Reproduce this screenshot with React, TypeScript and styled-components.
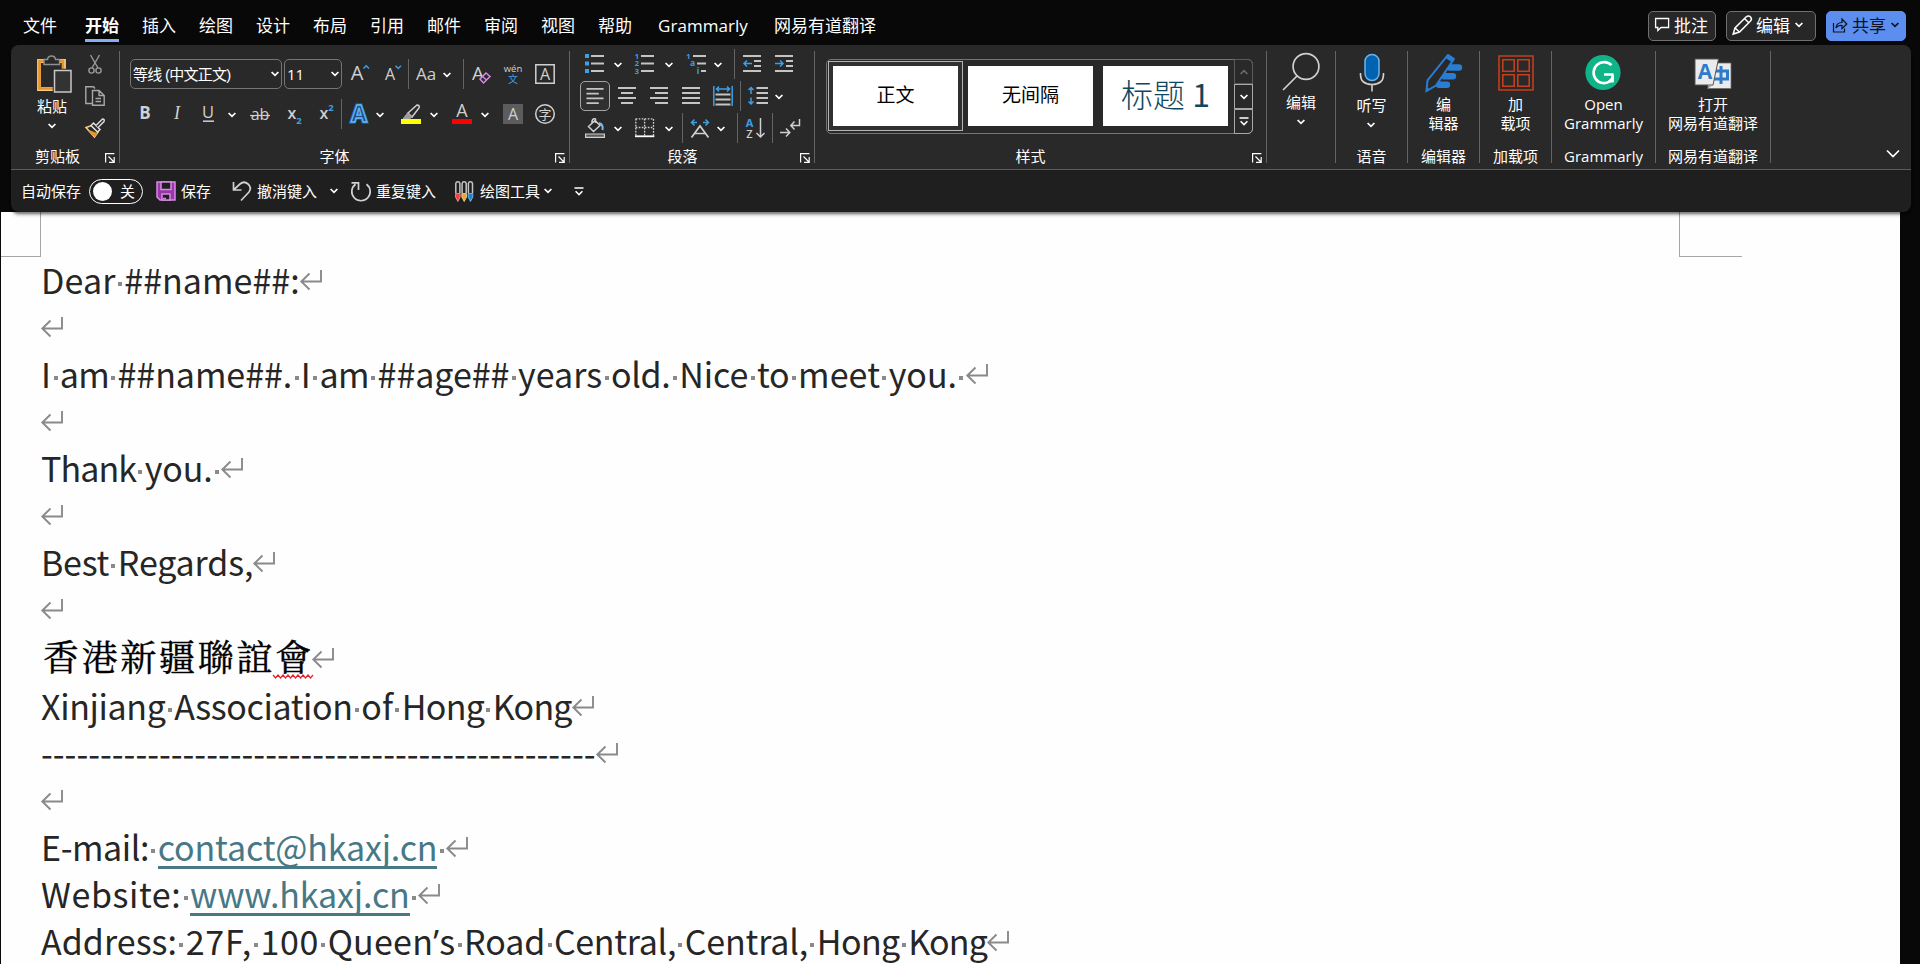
import React from 'react';
import styled, { createGlobalStyle, css } from 'styled-components';

const ui = '"Open Sans", "Noto Sans CJK SC", sans-serif';
const INK = '#d0d0d0';
const BLUE = '#3f9fe0';

const GlobalStyle = createGlobalStyle`
  html, body { margin: 0; padding: 0; background: #080808; overflow: hidden; }
  *, *::before, *::after { box-sizing: border-box; }
  svg { display: block; flex: none; overflow: visible; }
`;

const Window = styled.div`
  width: 1920px;
  height: 964px;
  overflow: hidden;
  display: flex;
  flex-direction: column;
  background: #080808;
  color: #fff;
  font-family: ${ui};
`;

/* ---------- tab strip ---------- */
const TabStrip = styled.header`
  height: 45px;
  flex: none;
  display: flex;
  align-items: flex-start;
  padding: 11px 14px 0 23px;
`;
const Tabs = styled.nav`
  display: flex;
  gap: 23px;
`;
const Tab = styled.span<{ $active?: boolean; $latin?: boolean }>`
  height: 31px;
  font-size: 17px;
  line-height: 30px;
  white-space: nowrap;
  ${p => p.$active && css`
    margin-left: 5px;
    font-weight: 700;
    box-shadow: inset 0 -3px #86aef2;
  `}
  ${p => p.$latin && css`
    margin: 0 3px;
    letter-spacing: 0.05px;
  `}
`;
const Actions = styled.div`
  display: flex;
  gap: 10px;
  margin-left: auto;
`;
const ActionButton = styled.button<{ $width: number; $primary?: boolean }>`
  width: ${p => p.$width}px;
  height: 30px;
  padding: 0 0 3px 5px;
  display: flex;
  align-items: center;
  gap: 4px;
  border-radius: 5px;
  border: 1px solid ${p => (p.$primary ? '#5b8eee' : '#707070')};
  background: ${p => (p.$primary ? '#5b8eee' : '#272727')};
  color: ${p => (p.$primary ? '#0c1220' : '#fff')};
  font: 17px ${ui};
  white-space: nowrap;
`;

/* ---------- ribbon ---------- */
const Ribbon = styled.section`
  height: 167px;
  flex: none;
  margin: 0 9px 0 11px;
  border-radius: 8px;
  background: #1f1f1f;
  position: relative;
  z-index: 2;
  box-shadow: 0 2px 2px rgba(0, 0, 0, 0.4), 0 4px 3px rgba(0, 0, 0, 0.16);
`;
const Groups = styled.div`
  height: 125px;
  padding: 6px 0;
  display: flex;
  border-radius: 8px 8px 0 0;
  border-bottom: 1px solid #5c5c5c;
  background: #292929;
`;
const Group = styled.div<{ $width: number }>`
  width: ${p => p.$width}px;
  height: 112px;
  flex: none;
  border-right: 1px solid #636363;
  display: flex;
  flex-direction: column;
`;
const GroupBody = styled.div`
  height: 100px;
  display: flex;
  justify-content: center;
`;
const GroupFooter = styled.div`
  height: 12px;
  display: flex;
  align-items: center;
  font-size: 15px;
  line-height: 12px;
`;
const GroupLabel = styled.span<{ $inset?: number }>`
  flex: 1;
  margin-right: ${p => p.$inset ?? 0}px;
  padding-bottom: 2px;
  text-align: center;
  white-space: nowrap;
`;
const LauncherBox = styled.span`
  width: 10px;
  margin-right: 4px;
  padding-top: 2px;
`;
const ExpandButton = styled.span`
  margin: 98px 11px 0 auto;
`;

const BigButton = styled.div`
  display: flex;
  flex-direction: column;
  align-items: center;
  padding-top: 2px;
  font-size: 15px;
  line-height: 19px;
  white-space: nowrap;
  text-align: center;
`;
const BigIcon = styled.span`
  height: 40px;
  display: flex;
  align-items: flex-start;
`;
const BigCaption = styled.span<{ $shift?: number }>`
  margin-top: ${p => 2 + (p.$shift ?? 0)}px;
`;
const CaptionLine = styled.span`
  display: block;
`;
const ChevronLine = styled.span`
  height: 19px;
  padding-top: 1px;
  display: flex;
  align-items: center;
  justify-content: center;
`;
const ClipboardSide = styled.div`
  display: flex;
  flex-direction: column;
  gap: 12px;
  padding-top: 3px;
  margin: 0 14px 0 12px;
`;
const PasteSlot = styled.div`
  margin-left: auto;
  ${BigIcon} { padding-left: 6px; }
`;

/* ---------- small tool rows ---------- */
const ToolRows = styled.div<{ $gap: number; $top: number }>`
  width: 100%;
  display: flex;
  flex-direction: column;
  gap: ${p => p.$gap}px;
  margin-top: ${p => p.$top}px;
`;
const ToolRow = styled.div`
  height: 30px;
  display: flex;
  align-items: center;
`;
const Tool = styled.span<{ $ml: number }>`
  width: 20px;
  height: 20px;
  flex: none;
  margin-left: ${p => p.$ml}px;
`;
const Drop = styled.span<{ $ml: number }>`
  width: 10px;
  flex: none;
  margin-left: ${p => p.$ml}px;
  padding-top: 1px;
`;
const Divider = styled.span<{ $ml: number }>`
  width: 1px;
  height: 30px;
  flex: none;
  margin-left: ${p => p.$ml}px;
  background: #636363;
`;
const Pressed = styled.span`
  width: 30px;
  height: 30px;
  margin-left: 10px;
  display: grid;
  place-items: center;
  border: 1px solid #a5a5a5;
  border-radius: 5px;
  background: #303030;
`;
const Combo = styled.span<{ $width: number; $ml: number }>`
  width: ${p => p.$width}px;
  height: 30px;
  flex: none;
  margin-left: ${p => p.$ml}px;
  padding: 0 1px 0 2px;
  display: flex;
  align-items: center;
  justify-content: space-between;
  border: 1px solid #757575;
  border-radius: 5px;
  font-size: 15px;
  white-space: nowrap;
`;
const ComboText = styled.span`
  letter-spacing: -0.75px;
  padding-bottom: 1px;
  font-family: "Liberation Sans", "Noto Sans CJK SC", sans-serif;
`;

/* ---------- style gallery ---------- */
const Gallery = styled.div`
  width: 427px;
  height: 75px;
  margin: 8px 13px 0 11px;
  display: flex;
  border: 1px solid #757575;
  border-radius: 5px;
`;
const StyleCell = styled.div<{ $selected?: boolean }>`
  width: 135px;
  height: 70px;
  margin-top: 1px;
  padding: 4px;
  border: 1px solid ${p => (p.$selected ? '#b4b4b4' : 'transparent')};
  background: ${p => (p.$selected ? '#303030' : 'transparent')};
  &:first-child { margin-left: 1px; }
`;
const StylePreview = styled.div<{ $heading?: boolean }>`
  width: 125px;
  height: 60px;
  display: flex;
  align-items: center;
  justify-content: center;
  background: #fff;
  color: ${p => (p.$heading ? '#0f4761' : '#000')};
  font-family: "Noto Sans CJK SC", sans-serif;
  font-size: ${p => (p.$heading ? 32 : 19)}px;
  font-weight: ${p => (p.$heading ? 200 : 400)};
  padding-bottom: 6px;
`;
const HeadingNumber = styled.span`
  font-weight: 400;
`;
const Scroller = styled.div`
  width: 19px;
  height: 75px;
  margin: -1px -1px 0 auto;
  display: flex;
  flex-direction: column;
`;
const ScrollButton = styled.span<{ $kind: 'up' | 'down' | 'more' }>`
  height: 25px;
  display: grid;
  place-items: center;
  border: 1px solid ${p => (p.$kind === 'up' ? '#5a5a5a' : '#a8a8a8')};
  border-radius: ${p => (p.$kind === 'up' ? '0 5px 0 0' : p.$kind === 'more' ? '0 0 5px 0' : '0')};
`;

/* ---------- quick access ---------- */
const QuickBar = styled.div`
  height: 42px;
  display: flex;
  align-items: center;
  padding-left: 10px;
  font-size: 15px;
  white-space: nowrap;
`;
const QuickItem = styled.span<{ $ml?: number; $gap?: number }>`
  display: flex;
  align-items: center;
  gap: ${p => p.$gap ?? 5}px;
  margin-left: ${p => p.$ml ?? 0}px;
`;
const QuickLabel = styled.span`
  padding-bottom: 2px;
`;
const Toggle = styled.span`
  width: 54px;
  height: 25px;
  margin-left: 8px;
  padding: 0 7px 0 3px;
  display: flex;
  align-items: center;
  justify-content: space-between;
  border: 1px solid #fff;
  border-radius: 13px;
`;
const Knob = styled.span`
  width: 19px;
  height: 19px;
  border-radius: 50%;
  background: #fff;
`;

/* ---------- document ---------- */
const Page = styled.main`
  flex: 1;
  width: 1899px;
  margin-left: 1px;
  background: #fefefe;
  overflow: hidden;
`;
const MarginMarks = styled.div`
  height: 45px;
  margin-bottom: -1px;
  display: flex;
  justify-content: space-between;
  padding-right: 158px;
`;
const CornerMark = styled.span<{ $side: 'left' | 'right' }>`
  width: ${p => (p.$side === 'left' ? 40 : 63)}px;
  border-bottom: 1px solid #a6a6a6;
  ${p => (p.$side === 'left' ? 'border-right' : 'border-left')}: 1px solid #a6a6a6;
`;
const Paragraph = styled.div<{ $cjk?: boolean }>`
  height: ${p => (p.$cjk ? 50 : 47)}px;
  padding-left: ${p => (p.$cjk ? 42 : 40)}px;
  display: flex;
  color: ${p => (p.$cjk ? '#000' : '#262626')};
  font-family: ${p => (p.$cjk ? '"AR PL UKai TW", "Noto Serif CJK TC", serif' : '"Noto Sans CJK SC", sans-serif')};
  font-size: ${p => (p.$cjk ? 36 : 34)}px;
  line-height: 47px;
  white-space: pre;
  font-variant-ligatures: none;
`;
const Word = styled.span<{ $track?: number; $link?: boolean }>`
  letter-spacing: ${p => p.$track ?? 0}px;
  ${p => p.$link && css`
    height: 46px;
    color: #467886;
    border-bottom: 3px solid #467886;
  `}
`;
const Apostrophe = styled.span`
  font-family: "Open Sans", sans-serif;
`;
const SpaceDot = styled.span`
  width: 8.66px;
  display: flex;
  justify-content: center;
  padding-top: 26px;
  font-size: 0;
  &::after {
    content: '';
    width: 4px;
    height: 4px;
    background: #8a8a8a;
  }
`;
const MarkBox = styled.span<{ $cjk?: boolean }>`
  padding-top: ${p => (p.$cjk ? 16 : 14)}px;
`;
const Hanzi = styled.span`
  letter-spacing: 2.7px;
  -webkit-text-stroke: 0.4px #000;
`;
const Misspelled = styled(Hanzi)`
  position: relative;
  margin-right: -2px;
  svg { position: absolute; left: -2px; top: 42px; }
`;

/* ---------- icons ---------- */
const Chevron = ({ color = '#fff' }: { color?: string }) => (
  <svg width="10" height="8" viewBox="0 0 10 8" fill="none" stroke={color} strokeWidth="1.7">
    <path d="M1.6 2 5 5.4 8.4 2" />
  </svg>
);
const Icon = ({ children, size = 20 }: { children: React.ReactNode; size?: number }) => (
  <svg width={size} height={size} viewBox={`0 0 ${size} ${size}`} fill="none" stroke={INK} strokeWidth="1.5">
    {children}
  </svg>
);
const Glyph = ({ x = 10, y = 17, size = 20, fill = INK, weight = 400, italic, anchor = 'middle', children }: {
  x?: number; y?: number; size?: number; fill?: string; weight?: number; italic?: boolean; anchor?: 'middle' | 'start'; children: string;
}) => (
  <text x={x} y={y} fontSize={size} fill={fill} stroke="none" fontWeight={weight} textAnchor={anchor}
    fontStyle={italic ? 'italic' : 'normal'} fontFamily={italic ? '"Liberation Serif", serif' : '"Open Sans", "Noto Sans CJK SC", sans-serif'}>
    {children}
  </text>
);
const Lines = ({ rows, color = '#c4c4c4' }: { rows: [number, number, number][]; color?: string }) => (
  <path stroke={color} strokeWidth="2" d={rows.map(([a, b, y]) => `M${a} ${y}H${b}`).join('')} />
);

const Launcher = () => (
  <LauncherBox>
    <svg width="10" height="10" viewBox="0 0 10 10" fill="none" stroke="#fff" strokeWidth="1.2">
      <path d="M.6 9.5V.6H9.4M3.5 3.5 9 9M9.2 4V9.3H4" />
    </svg>
  </LauncherBox>
);

const PasteIcon = () => (
  <svg width="36" height="40" viewBox="0 0 36 40" fill="none">
    <path d="M2 8H27V36H2Z" stroke="#f5d08c" strokeWidth="3.800" />
    <path d="M2.500 8H26V35.500H2.500Z" stroke="#e8952b" strokeWidth="2.600" />
    <path d="M7 11.500V6.500H10.500Q11 3 14.500 3T18.500 6.500H22.500V11.500Z" fill="#292929" stroke="#8f8f8f" strokeWidth="1.500" />
    <path d="M17.500 17.500H34V39H17.500Z" fill="#292929" stroke="#292929" strokeWidth="3.500" />
    <path d="M17.500 17.500H34V39H17.500Z" fill="#333" stroke="#c8c8c8" strokeWidth="1.500" />
  </svg>
);
const CutIcon = () => (
  <Icon>
    <g stroke="#9a9a9a" strokeWidth="1.400">
      <path d="M5.500 1 13 14M14.500 1 7 14" /><circle cx="6.500" cy="16.500" r="2.600" /><circle cx="13.500" cy="16.500" r="2.600" />
    </g>
  </Icon>
);
const CopyIcon = () => (
  <Icon>
    <g stroke="#a8a8a8" strokeWidth="1.400">
      <path d="M7 17.500H.8V.8H8.500L10 2.500" /><path d="M7.500 4.500H14L19.200 9.500V19.200H7.500ZM14 4.500V9.500H19M10.500 12.500H16M10.500 15.500H16" />
    </g>
  </Icon>
);
const BrushIcon = () => (
  <Icon>
    <path d="M1 9.500 6.500 7.500 13 14 9.500 19Z" fill="#292929" stroke="#f5d08c" />
    <path d="M4 12.500 12 15.500 9.500 18.500Z" fill="#e8952b" stroke="#e8952b" strokeWidth="1" />
    <path d="M6 7.500 8.500 5 15 11.500 12.500 14Z" fill="#292929" stroke="#e0e0e0" />
    <path d="M11 7.500 17.500 1Q20 1 19 3.500L13 9.500" fill="#292929" stroke="#d8d8d8" />
  </Icon>
);

const ClearFormatIcon = () => (
  <Icon><Glyph x={7} y={16} size={19}>A</Glyph><path d="M9 15 15 9 19 12.500 12.500 19Z" fill="#292929" stroke="#d68ae0" /><path d="M11.500 12.500 15.500 16" stroke="#d68ae0" /></Icon>
);
const BoxedLetterIcon = () => (
  <Icon><path d="M.8.800H19.200V19.200H.8Z" /><Glyph y={16} size={16}>A</Glyph></Icon>
);
const HighlighterIcon = () => (
  <Icon>
    <path d="M7 9 16 1Q19 1 18 4L11 13Z" /><path d="M6.500 9 11 13 8 15H2Z" fill="#999" stroke="#aaa" strokeWidth="1" />
    <path d="M0 15H20V20H0Z" fill="#ff0" stroke="none" />
  </Icon>
);

const align = {
  left: [[0, 18, 2], [0, 13, 7], [0, 18, 12], [0, 13, 17]],
  center: [[1, 19, 2], [4, 16, 7], [1, 19, 12], [4, 16, 17]],
  right: [[1, 19, 2], [6, 19, 7], [1, 19, 12], [6, 19, 17]],
  justify: [[1, 19, 2], [1, 19, 7], [1, 19, 12], [1, 19, 17]],
} as Record<string, [number, number, number][]>;

const UndoIcon = () => (
  <svg width="20" height="22" viewBox="0 0 20 22" fill="none" stroke={INK} strokeWidth="1.700">
    <path d="M1.500 2V10H9.500M2 9.500 8 4Q12 .5 16 4T17 12L9 20.500" />
  </svg>
);
const RedoIcon = () => (
  <svg width="20" height="22" viewBox="0 0 20 22" fill="none" stroke={INK} strokeWidth="1.700">
    <path d="M4.500 4.200A9.200 9.200 0 1 0 15.500 4.200M.5 2.800H7.500V10" />
  </svg>
);
const SaveIcon = () => (
  <Icon>
    <path d="M1 1H19V19H4L1 16Z" fill="#9a37a8" stroke="#d98be4" />
    <path d="M5 1H15V8.500H5Z" fill="#1f1f1f" stroke="#d98be4" /><path d="M6 19V13H14V19Z" fill="#1f1f1f" stroke="#d98be4" /><path d="M7 17.500H10" stroke="#d98be4" />
  </Icon>
);
const PensIcon = () => (
  <svg width="19" height="21" viewBox="0 0 19 21" fill="none">
    {([['#e8473f', '#f39a95', 0], ['#e8a33b', '#f8dc9c', 6.300], ['#1f82d6', '#8cc4f2', 12.600]] as [string, string, number][]).map(([dark, light, x]) => (
      <g key={dark} transform={`translate(${x} 0)`}>
        <path d="M.8 12V2.500Q1 .8 2.800 .8T4.900 2.500V12" stroke="#c4c4c4" strokeWidth="1.500" />
        <path d="M.5 12.500H5.200V16L2.900 20.500 .5 16Z" fill={dark} stroke={light} strokeWidth=".8" />
      </g>
    ))}
  </svg>
);

const MagnifierIcon = () => (
  <svg width="38" height="38" viewBox="0 0 38 38" fill="none" stroke={INK} strokeWidth="1.700"><circle cx="24" cy="13.500" r="12.900" /><path d="M15 23 1 37" /></svg>
);
const MicIcon = () => (
  <svg width="24" height="40" viewBox="0 0 24 40" fill="none">
    <rect x="6" y="1.500" width="14" height="26" rx="7" fill="#0063b1" stroke="#6cb4ee" strokeWidth="1.500" />
    <path d="M1.500 20V21.500Q1.500 31.500 13 31.500T24.500 21.500V20M13 32V38.500" stroke={INK} strokeWidth="1.600" />
  </svg>
);
const EditorIcon = () => (
  <svg width="40" height="40" viewBox="0 0 40 40" fill="none">
    <path d="M26 14.500H35M20 23.300H29M15 31.800H23" stroke="#2b7cd3" strokeWidth="6.400" strokeLinecap="round" />
    <path d="M23.500 2.500 29.500 6.500 12 32.500 2.500 38 3.500 27.500Z" fill="#292929" stroke="#2b7cd3" strokeWidth="2" />
    <path d="M24 .8 31 5.500 28.500 9.500 21 4.800ZM1.800 39 2.500 34 6 36.500Z" fill="#2b7cd3" />
  </svg>
);
const AddinsIcon = () => (
  <svg width="36" height="38" viewBox="0 0 36 38" fill="none" stroke="#c43e1c" strokeWidth="1.600">
    <path d="M1 3H35V37H1ZM4.800 6.800H16.200V18.200H4.800ZM19.800 6.800H31.200V18.200H19.800ZM4.800 21.800H16.200V33.200H4.800ZM19.800 21.800H31.200V33.200H19.800Z" />
  </svg>
);
const GrammarlyIcon = () => (
  <svg width="36" height="38" viewBox="0 0 36 38" fill="none">
    <circle cx="18" cy="19.500" r="17.600" fill="#0fb488" />
    <path d="M26.500 12.200A10.500 10.500 0 1 0 25 28.300" stroke="#fff" strokeWidth="2.600" />
    <path d="M19 21.500H27.500V28.500" stroke="#fff" strokeWidth="2.400" />
    <path d="M21.500 29.500H28.700V22Z" fill="#fff" />
  </svg>
);
const TranslateIcon = () => (
  <svg width="38" height="38" viewBox="0 0 38 38" fill="none">
    <path d="M20 10H37V35.500H13.500L18 31Z" fill="#ebebeb" stroke="#6c6c6c" strokeWidth=".8" />
    <path d="M21.500 18H33.500V26H20M27 13V31" stroke="#2e7bcb" strokeWidth="3" />
    <path d="M1 6H24.500L19 32H1Z" fill="#ebebeb" stroke="#555" strokeWidth="1" />
    <path d="M13.500 35.500 19 32H14Z" fill="#999" />
    <Glyph x={11} y={25.500} size={21} fill="#2e7bcb" weight={700}>A</Glyph>
  </svg>
);
const CommentIcon = () => (
  <svg width="16" height="15" viewBox="0 0 16 15" fill="none" stroke="#fff" strokeWidth="1.300"><path d="M1.600 1.500H14.600V10.500H7L3.800 13.500V10.500H1.600Z" /></svg>
);
const PencilIcon = () => (
  <Icon><path d="M1.200 19 3 13 14 2Q16.500 0 18.500 2T18.500 6L7.500 17ZM12.500 3.500 17 8M3 13 7.500 17" stroke="#fff" /></Icon>
);
const ShareIcon = () => (
  <svg width="16" height="16" viewBox="0 0 16 16" fill="none" stroke="#0c1220" strokeWidth="1.200">
    <path d="M1.500 6V15H12.500V11.500M4 11Q4.500 5.500 10 5.500V2L14.800 7 10 11.500V8.500Q6 8 4 11Z" />
  </svg>
);
const ReturnMark = () => (
  <svg width="22" height="21" viewBox="0 0 22 21" fill="none" stroke="#8a8a8a" strokeWidth="1.900"><path d="M21 0V11.500H1.500M9.500 3.500 1.300 11.500 9.500 19.500" /></svg>
);

/* ---------- document content ---------- */
type Run = { text: string; track?: number; link?: boolean };
const w = (text: string, track = 0): Run => ({ text, track });
const a = (text: string, track = 0): Run => ({ text, track, link: true });
type Line = { runs: Run[]; trailing?: boolean };

const opening: Line[] = [
  { runs: [w('Dear', 0.15), w('##name##:', 0.03)] },
  { runs: [] },
  { runs: [w('I', 0.2), w('am', -0.8), w('##name##.', -0.05), w('I'), w('am', -0.6), w('##age##', -0.05), w('years', 0.05), w('old.', -0.3), w('Nice'), w('to', -0.3), w('meet', 0.1), w('you.')], trailing: true },
  { runs: [] },
  { runs: [w('Thank', -0.9), w('you.', -0.1)], trailing: true },
  { runs: [] },
  { runs: [w('Best', -0.25), w('Regards,', -0.15)] },
  { runs: [] },
];
const signature: Line[] = [
  { runs: [w('Xinjiang', -0.35), w('Association', -0.4), w('of', 0.1), w('Hong', -0.75), w('Kong', -0.8)] },
  { runs: [w('-'.repeat(47))] },
  { runs: [] },
  { runs: [w('E-mail:', -0.4), a('contact@hkaxj.cn', -0.18)], trailing: true },
  { runs: [w('Website:', 0.6), a('www.hkaxj.cn', -0.13)], trailing: true },
  { runs: [w('Address:', 0.03), w('27F,', 0.75), w('100', 0.6), w('Queen’s', 0.25), w('Road', -0.05), w('Central,', -0.32), w('Central,', -0.15), w('Hong', -0.6), w('Kong', -0.9)] },
];

const DocLine = ({ line }: { line: Line }) => (
  <Paragraph>
    {line.runs.map((r, i) => (
      <React.Fragment key={i}>
        {i > 0 && <SpaceDot> </SpaceDot>}
        <Word $track={r.track} $link={r.link}>
          {r.text.split('’').map((part, k) => <React.Fragment key={k}>{k > 0 && <Apostrophe>’</Apostrophe>}{part}</React.Fragment>)}
        </Word>
      </React.Fragment>
    ))}
    {line.trailing && <SpaceDot> </SpaceDot>}
    <MarkBox><ReturnMark /></MarkBox>
  </Paragraph>
);

const D = ({ ml }: { ml: number }) => <Drop $ml={ml}><Chevron /></Drop>;

const FontGroup = () => (
  <Group $width={450}>
    <GroupBody>
      <ToolRows $gap={10} $top={8}>
        <ToolRow>
          <Combo $width={152} $ml={10}><ComboText>等线 (中文正文)</ComboText><Chevron /></Combo>
          <Combo $width={58} $ml={2}>11<Chevron /></Combo>
          <Tool $ml={8}><Icon><Glyph x={7} y={16}>A</Glyph><path d="M13.500 4.500 16.200 1.800 19 4.500" stroke={BLUE} /></Icon></Tool>
          <Tool $ml={14}><Icon><Glyph x={6} y={16} size={16}>A</Glyph><path d="M11.500 1.800 14.200 4.500 17 1.800" stroke={BLUE} /></Icon></Tool>
          <Divider $ml={4} />
          <Tool $ml={7}><Icon><Glyph x={0} y={16} size={17} anchor="start">Aa</Glyph></Icon></Tool>
          <D ml={6} />
          <Divider $ml={11} />
          <Tool $ml={7}><ClearFormatIcon /></Tool>
          <Tool $ml={12}><Icon><Glyph y={7.500} size={9.500}>wén</Glyph><Glyph y={18.500} size={10} fill={BLUE}>文</Glyph></Icon></Tool>
          <Tool $ml={12}><BoxedLetterIcon /></Tool>
        </ToolRow>
        <ToolRow>
          <Tool $ml={15}><Icon><Glyph y={15} size={17} weight={700}>B</Glyph></Icon></Tool>
          <Tool $ml={12}><Icon><Glyph y={15} size={18} italic>I</Glyph></Icon></Tool>
          <Tool $ml={11}><Icon><Glyph y={14} size={16.500}>U</Glyph><path d="M5 17.200H16" /></Icon></Tool>
          <D ml={9} />
          <Tool $ml={13}><Icon><Glyph y={16} size={16}>ab</Glyph><path d="M0 11.500H20" strokeWidth="1.200" /></Icon></Tool>
          <Tool $ml={15}><Icon><Glyph x={7} y={15} size={16} weight={600}>x</Glyph><Glyph x={14} y={20} size={9.500} weight={700} fill={BLUE}>2</Glyph></Icon></Tool>
          <Tool $ml={12}><Icon><Glyph x={7} y={15} size={16} weight={600}>x</Glyph><Glyph x={14} y={7} size={9.500} weight={700} fill={BLUE}>2</Glyph></Icon></Tool>
          <Divider $ml={4} />
          <Tool $ml={7}>
            <Icon>
              <text x="10" y="18" fontSize="23" fontWeight="700" textAnchor="middle" fill="#1d4f80" stroke="#1670c4" strokeWidth="3" paintOrder="stroke" fontFamily='"Open Sans", sans-serif'>A</text>
              <text x="10" y="18" fontSize="23" fontWeight="700" textAnchor="middle" fill="#1d4f80" stroke="#69b5f5" strokeWidth="1.300" aria-hidden="true" fontFamily='"Open Sans", sans-serif'>A</text>
            </Icon>
          </Tool>
          <D ml={6} />
          <Tool $ml={16}><HighlighterIcon /></Tool>
          <D ml={8} />
          <Tool $ml={13}><Icon><Glyph y={13} size={18}>A</Glyph><path d="M0 15H20V20H0Z" fill="#f00" stroke="none" /></Icon></Tool>
          <D ml={8} />
          <Tool $ml={13}><Icon><path d="M0 0H20V20H0Z" fill="#5c5c5c" stroke="none" /><Glyph y={16} size={16}>A</Glyph></Icon></Tool>
          <Tool $ml={12}><Icon><circle cx="10" cy="10" r="9.300" /><Glyph y={15} size={13}>字</Glyph></Icon></Tool>
        </ToolRow>
      </ToolRows>
    </GroupBody>
    <GroupFooter><GroupLabel $inset={6}>字体</GroupLabel><Launcher /></GroupFooter>
  </Group>
);

const ParagraphGroup = () => (
  <Group $width={245}>
    <GroupBody>
      <ToolRows $gap={2} $top={-2}>
        <ToolRow>
          <Tool $ml={15}><Icon><path d="M0 0H4V4H0ZM0 7.500H4V11.500H0ZM0 15H4V19H0Z" fill={BLUE} stroke="none" /><Lines rows={[[6, 19, 2], [6, 19, 9.500], [6, 19, 17]]} /></Icon></Tool>
          <D ml={8} />
          <Tool $ml={12}>
            <Icon>
              <Glyph x={1.800} y={4.500} size={7.500} weight={700} fill={BLUE}>1</Glyph><Glyph x={1.800} y={12.300} size={7.500} weight={700} fill={BLUE}>2</Glyph><Glyph x={1.800} y={20} size={7.500} weight={700} fill={BLUE}>3</Glyph>
              <Lines rows={[[6, 19, 2], [6, 19, 9.500], [6, 19, 17]]} />
            </Icon>
          </Tool>
          <D ml={9} />
          <Tool $ml={13}>
            <Icon>
              <Glyph x={1.500} y={4.500} size={7.500} weight={700} fill={BLUE}>1</Glyph><Glyph x={5.500} y={12.300} size={8.500} weight={700} fill={BLUE}>a</Glyph><Glyph x={11} y={20} size={8.500} weight={700} fill={BLUE}>i</Glyph>
              <Lines rows={[[6, 19, 2], [10, 19, 9.500], [14, 19, 17]]} />
            </Icon>
          </Tool>
          <D ml={6} />
          <Divider $ml={11} />
          <Tool $ml={7}><Icon><Lines rows={[[1, 19, 2], [12, 19, 7], [12, 19, 12], [1, 19, 17]]} /><path d="M10 9.500H2M5 6.500 2 9.500 5 12.500" stroke={BLUE} /></Icon></Tool>
          <Tool $ml={12}><Icon><Lines rows={[[1, 19, 2], [12, 19, 7], [12, 19, 12], [1, 19, 17]]} /><path d="M1 9.500H9M6 6.500 9 9.500 6 12.500" stroke={BLUE} /></Icon></Tool>
        </ToolRow>
        <ToolRow>
          <Pressed><svg width="18" height="18" viewBox="0 0 18 19"><Lines rows={align.left} /></svg></Pressed>
          <Tool $ml={7}><Icon><Lines rows={align.center} /></Icon></Tool>
          <Tool $ml={12}><Icon><Lines rows={align.right} /></Icon></Tool>
          <Tool $ml={12}><Icon><Lines rows={align.justify} /></Icon></Tool>
          <Tool $ml={12}><Icon><path d="M.8 0V20M19.200 0V20M3.500 3H16.500M6 .5 3.500 3 6 5.500M14 .5 16.500 3 14 5.500" stroke={BLUE} /><Lines rows={[[2.500, 17.500, 8.500], [2.500, 17.500, 13.500], [2.500, 17.500, 18.500]]} /></Icon></Tool>
          <Divider $ml={7} />
          <Tool $ml={7}><Icon><path d="M3 1.500V8M.5 4 3 1.500 5.500 4M3 11.500V18M.5 15.500 3 18 5.500 15.500" stroke={BLUE} /><Lines rows={[[8.500, 20, 2], [8.500, 20, 7], [8.500, 20, 12], [8.500, 20, 17]]} /></Icon></Tool>
          <D ml={6} />
        </ToolRow>
        <ToolRow>
          <Tool $ml={15}><Icon><path d="M3.500 8.500 10 2.500 15 7.500 8.500 13.500ZM7 5.500V3Q8 0 10.500 1V5" /><path d="M14 5Q18.500 6 17.500 12" stroke="#7fbdea" strokeWidth="2" /><path d="M.6 16H19.400V19.400H.6Z" fill="#5c5c5c" strokeWidth="1.200" /></Icon></Tool>
          <D ml={8} />
          <Tool $ml={12}><Icon><path d="M.8.800H18.500V18M.8.800V18M.8 9.500H18.500M9.600.800V18" strokeDasharray="1.600 1.400" strokeWidth="1.300" /><path d="M0 18.300H19.300" stroke="#fff" strokeWidth="1.800" /></Icon></Tool>
          <D ml={9} />
          <Divider $ml={8} />
          <Tool $ml={7}><Icon><path d="M1.500 4.500H7M4.500 1.500 1.500 4.500 4.500 7.500M13 4.500H18.500M15.500 1.500 18.500 4.500 15.500 7.500" stroke={BLUE} /><path d="M1.500 19.500 10 8 18.500 19.500M5 15.500H15" strokeWidth="1.700" /></Icon></Tool>
          <D ml={6} />
          <Divider $ml={11} />
          <Tool $ml={7}><Icon><Glyph x={4.500} y={8.500} size={11} weight={700} fill={BLUE}>A</Glyph><Glyph x={4.500} y={20} size={11} weight={600}>Z</Glyph><path d="M15.500 0V19M11.500 15 15.500 19 19.500 15" /></Icon></Tool>
          <Divider $ml={7} />
          <Tool $ml={7}><Icon><path d="M19.500 1V7.500H11M14.500 3.500 10.800 7.500 14.500 11.500M0 14.500H9.500M6 10.500 9.800 14.500 6 18.500" /></Icon></Tool>
        </ToolRow>
      </ToolRows>
    </GroupBody>
    <GroupFooter><GroupLabel $inset={5}>段落</GroupLabel><Launcher /></GroupFooter>
  </Group>
);

const StylesGroup = () => (
  <Group $width={452}>
    <GroupBody>
      <Gallery>
        <StyleCell $selected><StylePreview>正文</StylePreview></StyleCell>
        <StyleCell><StylePreview>无间隔</StylePreview></StyleCell>
        <StyleCell><StylePreview $heading>标题<HeadingNumber>&nbsp;1</HeadingNumber></StylePreview></StyleCell>
        <Scroller>
          <ScrollButton $kind="up"><svg width="10" height="8" viewBox="0 0 10 8" fill="none" stroke="#6a6a6a" strokeWidth="1.700"><path d="M1.600 6 5 2.600 8.400 6" /></svg></ScrollButton>
          <ScrollButton $kind="down"><Chevron /></ScrollButton>
          <ScrollButton $kind="more"><svg width="10" height="9" viewBox="0 0 10 9" fill="none" stroke="#fff" strokeWidth="1.500"><path d="M.5 1H9.500M1.600 4.200 5 7.600 8.400 4.200" /></svg></ScrollButton>
        </Scroller>
      </Gallery>
    </GroupBody>
    <GroupFooter><GroupLabel $inset={6}>样式</GroupLabel><Launcher /></GroupFooter>
  </Group>
);

const Command = ({ width, icon, lines, label, drop, shift }: {
  width: number; icon: React.ReactNode; lines: string[]; label?: string; drop?: boolean; shift?: number;
}) => (
  <Group $width={width}>
    <GroupBody>
      <BigButton>
        <BigIcon>{icon}</BigIcon>
        <BigCaption $shift={shift}>{lines.map(l => <CaptionLine key={l}>{l}</CaptionLine>)}</BigCaption>
        {drop && <ChevronLine><Chevron /></ChevronLine>}
      </BigButton>
    </GroupBody>
    <GroupFooter>{label && <GroupLabel>{label}</GroupLabel>}</GroupFooter>
  </Group>
);

export default function App() {
  return (
    <Window>
      <GlobalStyle />
      <TabStrip>
        <Tabs>
          {['文件', '开始', '插入', '绘图', '设计', '布局', '引用', '邮件', '审阅', '视图', '帮助', 'Grammarly', '网易有道翻译'].map(t => (
            <Tab key={t} $active={t === '开始'} $latin={t === 'Grammarly'}>{t}</Tab>
          ))}
        </Tabs>
        <Actions>
          <ActionButton $width={68}><CommentIcon />批注</ActionButton>
          <ActionButton $width={90}><PencilIcon />编辑<Chevron /></ActionButton>
          <ActionButton $width={80} $primary><ShareIcon />共享<Chevron color="#0c1220" /></ActionButton>
        </Actions>
      </TabStrip>

      <Ribbon>
        <Groups>
          <Group $width={109}>
            <GroupBody>
              <PasteSlot>
                <BigButton>
                  <BigIcon><PasteIcon /></BigIcon>
                  <BigCaption $shift={2}>粘贴</BigCaption>
                  <ChevronLine><Chevron /></ChevronLine>
                </BigButton>
              </PasteSlot>
              <ClipboardSide><CutIcon /><CopyIcon /><BrushIcon /></ClipboardSide>
            </GroupBody>
            <GroupFooter><GroupLabel $inset={1}>剪贴板</GroupLabel><Launcher /></GroupFooter>
          </Group>
          <FontGroup />
          <ParagraphGroup />
          <StylesGroup />
          <Command width={69} icon={<MagnifierIcon />} lines={['编辑']} drop shift={-2} />
          <Command width={72} icon={<MicIcon />} lines={['听写']} label="语音" drop shift={1} />
          <Command width={72} icon={<EditorIcon />} lines={['编', '辑器']} label="编辑器" />
          <Command width={72} icon={<AddinsIcon />} lines={['加', '载项']} label="加载项" />
          <Command width={104} icon={<GrammarlyIcon />} lines={['Open', 'Grammarly']} label="Grammarly" />
          <Command width={115} icon={<TranslateIcon />} lines={['打开', '网易有道翻译']} label="网易有道翻译" />
          <ExpandButton>
            <svg width="14" height="9" viewBox="0 0 14 9" fill="none" stroke="#fff" strokeWidth="1.700"><path d="M1 1.500 7 7.500 13 1.500" /></svg>
          </ExpandButton>
        </Groups>
        <QuickBar>
          <QuickLabel>自动保存</QuickLabel>
          <Toggle><Knob /><QuickLabel>关</QuickLabel></Toggle>
          <QuickItem $ml={13}><SaveIcon /><QuickLabel>保存</QuickLabel></QuickItem>
          <QuickItem $ml={21} $gap={5}><UndoIcon /><QuickLabel>撤消键入</QuickLabel></QuickItem>
          <QuickItem $ml={12}><Chevron /></QuickItem>
          <QuickItem $ml={12} $gap={5}><RedoIcon /><QuickLabel>重复键入</QuickLabel></QuickItem>
          <QuickItem $ml={19} $gap={6}><PensIcon /><QuickLabel>绘图工具</QuickLabel></QuickItem>
          <QuickItem $ml={3}><Chevron /></QuickItem>
          <QuickItem $ml={21}>
            <svg width="10" height="9" viewBox="0 0 10 9" fill="none" stroke="#fff" strokeWidth="1.500"><path d="M.5 1H9.500M1.600 4.200 5 7.600 8.400 4.200" /></svg>
          </QuickItem>
        </QuickBar>
      </Ribbon>

      <Page>
        <MarginMarks><CornerMark $side="left" /><CornerMark $side="right" /></MarginMarks>
        {opening.map((line, i) => <DocLine key={i} line={line} />)}
        <Paragraph $cjk>
          <Hanzi>香港新疆聯誼</Hanzi>
          <Misspelled>
            會
            <svg width="40" height="5" viewBox="0 0 40 5" fill="none" stroke="#e8202a" strokeWidth="1.200">
              <path d="M0 1 2.500 4 5 1 7.500 4 10 1 12.500 4 15 1 17.500 4 20 1 22.500 4 25 1 27.500 4 30 1 32.500 4 35 1 37.500 4 40 1" />
            </svg>
          </Misspelled>
          <MarkBox $cjk><ReturnMark /></MarkBox>
        </Paragraph>
        {signature.map((line, i) => <DocLine key={i} line={line} />)}
      </Page>
    </Window>
  );
}
